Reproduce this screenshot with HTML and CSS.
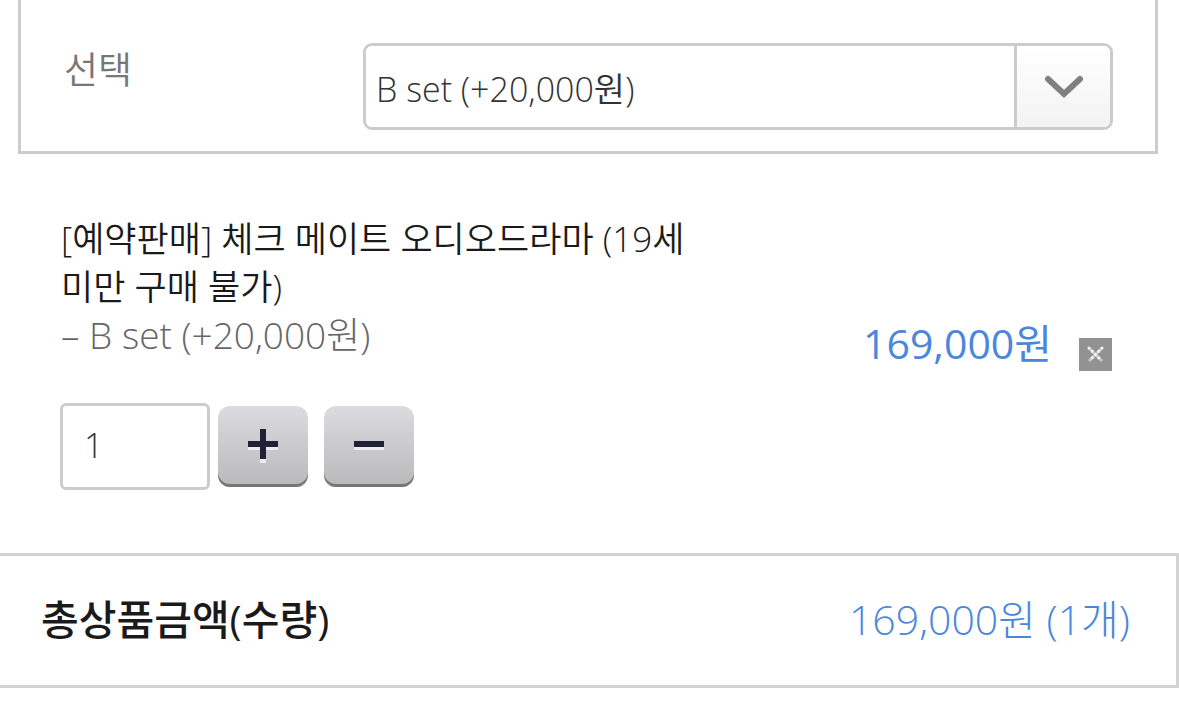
FILE: index.html
```html
<!DOCTYPE html>
<html lang="ko">
<head>
    <meta charset="UTF-8">
    <meta name="viewport" content="width=device-width, initial-scale=1.0">
    <title>상품 옵션 선택</title>
    <link rel="stylesheet" href="styles.css">
</head>
<body>
    <div class="option-box">
        <label for="option">선택</label>
        <div class="select-wrap">
            <select id="option">
                <option>B set (+20,000원)</option>
            </select>
            <span class="select-arrow">
                <svg width="40" height="26" viewBox="0 0 40 26"><path d="M4 5l16 15L36 5" fill="none" stroke="#808080" stroke-width="6" stroke-linecap="round"/></svg>
            </span>
        </div>
    </div>

    <div class="item">
        <div class="item-info">
            <p class="item-name">[예약판매] 체크 메이트 오디오드라마 (19세 미만 구매 불가)</p>
            <p class="item-option">– B set (+20,000원)</p>
        </div>
        <div class="item-price">
            <span>169,000원</span>
            <button class="delete" aria-label="삭제">
                <svg width="17" height="17" viewBox="0 0 17 17"><path d="M2 2l13 13M15 2L2 15" stroke="#c8c8c8" stroke-width="3"/><path d="M2 2l13 13M15 2L2 15" stroke="#f4f4f4" stroke-width="3" stroke-linecap="round" stroke-dasharray="0 4.6"/></svg>
            </button>
        </div>
        <div class="quantity">
            <input type="text" id="qty" value="1" aria-label="수량">
            <button class="step" aria-label="수량 증가">
                <svg width="32" height="36" viewBox="0 0 32 36"><path d="M1 18h30M16 3v31" stroke="#ececf0" stroke-width="6"/><path d="M1 15h30M16 0v30" stroke="#222236" stroke-width="6"/></svg>
            </button>
            <button class="step" aria-label="수량 감소">
                <svg width="32" height="36" viewBox="0 0 32 36"><path d="M1 18h30" stroke="#ececf0" stroke-width="6"/><path d="M1 15h30" stroke="#222236" stroke-width="6"/></svg>
            </button>
        </div>
    </div>

    <div class="total">
        <strong>총상품금액(수량)</strong>
        <span>169,000원 (1개)</span>
    </div>
</body>
</html>
```
FILE: styles.css
```css
* {
    box-sizing: border-box;
}
body {
    margin: 0;
    background: #fff;
    color: #1a1a1a;
    font-family: "Open Sans", "Noto Sans CJK KR", sans-serif;
    font-weight: 350;
    font-size: 37px;
    line-height: 48px;
}
p {
    margin: 0;
}
button, input, select {
    font: inherit;
    color: #333;
}
button {
    display: flex;
    align-items: center;
    justify-content: center;
    padding: 0;
    border: none;
    cursor: pointer;
}
.option-box {
    display: flex;
    justify-content: space-between;
    margin: 0 21px 0 18px;
    padding: 43px 42px 21px 43px;
    border: 3px solid #ccc;
    border-top: none;
}
.option-box label {
    padding-top: 3px;
    color: #777;
}
.select-wrap {
    display: flex;
    width: 750px;
    height: 87px;
    border: 3px solid #ccc;
    border-radius: 9px;
    overflow: hidden;
}
.select-wrap select {
    flex: 1;
    padding: 4px 10px 0;
    border: none;
    background: #fff;
    font-size: 34px;
    appearance: none;
}
.select-arrow {
    display: flex;
    align-items: center;
    justify-content: center;
    width: 96px;
    border-left: 3px solid #ccc;
    background: linear-gradient(#fff, #f3f3f3);
}
.item {
    display: grid;
    grid-template-columns: 650px 1fr;
    align-items: end;
    padding: 61px 67px 63px 61px;
}
.item-name {
    font-size: 35px;
}
.item-option {
    color: #666;
    font-weight: 300;
}
.item-price {
    display: flex;
    align-items: flex-end;
    justify-content: flex-end;
    gap: 27px;
    margin-bottom: -12px;
    color: #4a87dc;
    font-size: 41px;
    font-weight: 400;
    line-height: 56px;
}
.delete {
    width: 33px;
    height: 33px;
    background: #929292;
}
.quantity {
    display: flex;
    align-items: center;
    margin: 44px 0 0 -1px;
}
.quantity input {
    width: 150px;
    height: 87px;
    margin-right: 8px;
    padding: 0 21px 4px;
    border: 3px solid #ccc;
    border-radius: 6px;
    font-size: 34px;
}
.step {
    width: 90px;
    height: 81px;
    margin-right: 16px;
    border-radius: 12px;
    background: linear-gradient(#dcdce0, #b9b9ba);
    box-shadow: inset 0 -3px #777;
}
.total {
    display: flex;
    align-items: center;
    justify-content: space-between;
    height: 135px;
    padding: 0 46px 4px 41px;
    border: 3px solid #d3d3d3;
    border-left: none;
    font-size: 41px;
}
.total strong {
    font-weight: 500;
}
.total span {
    color: #4a87dc;
    font-weight: 300;
}
```
